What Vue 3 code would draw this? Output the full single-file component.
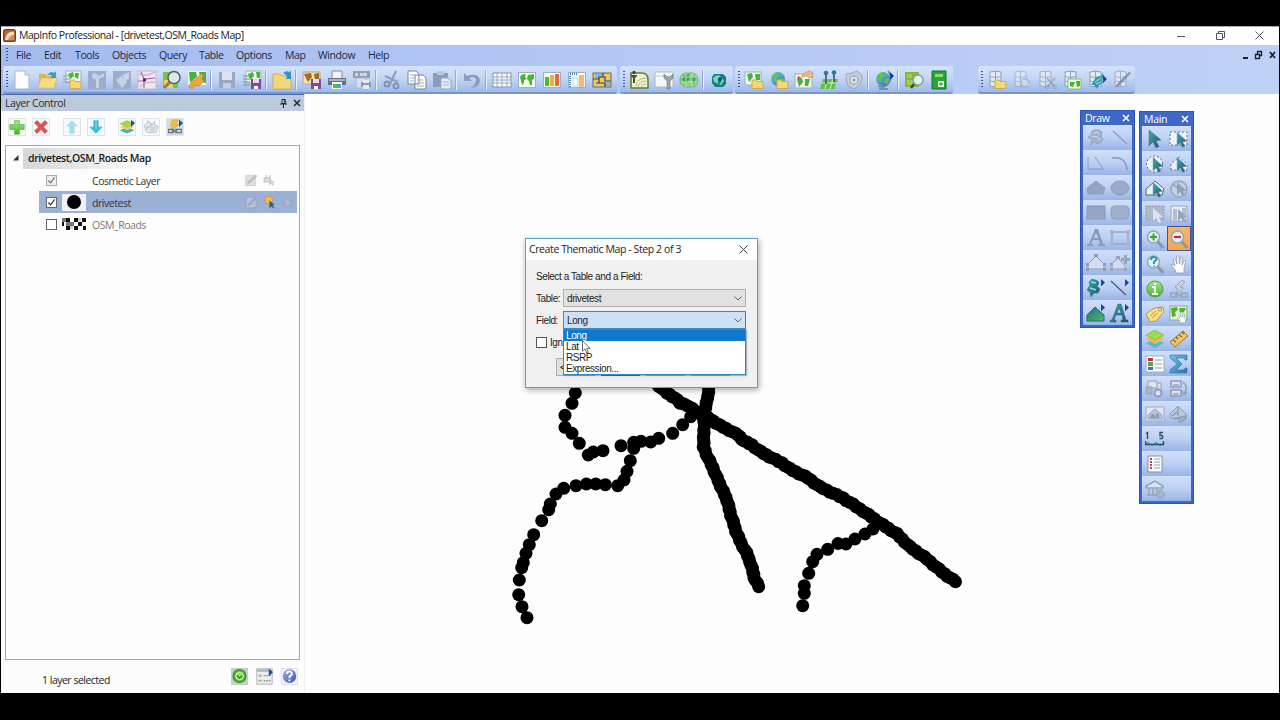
<script setup>
import { ref } from "vue";

const menus = ["File", "Edit", "Tools", "Objects", "Query", "Table", "Options", "Map", "Window", "Help"];

// "|" is a separator
const toolbars = [
  {
    name: "standard",
    items: [
      "page", "open", "openTable", "dim1", "dim2", "roads", "findMap", "mapHand", "|",
      "floppyOff", "saveMap", "|", "folderUp", "|",
      "saveBrown", "printer", "printOff", "|",
      "cut", "copy", "paste", "|", "undo", "|",
      "grid", "world", "chart", "layout", "redistrict",
    ],
  },
  { name: "utilities", items: ["contour", "wrench", "globeGreen", "|", "swirl"] },
  { name: "web", items: ["mapFolder", "globeFolder", "mapPick", "pins", "rings", "|", "globeStand", "|", "mapZoom", "book"] },
  { name: "dbms", items: ["dbFolder", "dbRefresh", "dbCut", "dbMap", "dbGear", "dbPen"] },
];

const drawTools = [
  "pinOff", "lineOff", "polyline", "arc", "polyOff", "ellipse", "rect", "roundRect",
  "textOff", "frame", "reshape", "addNode", "pinStyle", "lineStyle", "regionStyle", "textStyle",
];

const mainTools = [
  "arrow", "marquee", "radius", "polySelect", "boundary", "unselect", "invert", "graphSelect",
  "zoomIn", "zoomOut", "zoomAsk", "hand", "info", "hotlink", "tag", "dragMap",
  "layers", "ruler", "legend", "sigma", "district", "districtSwap", "clipOn", "clipSet",
  "scale", "", "list", "", "bank", "",
];

const panelTools = ["plus", "cross", "up", "down", "layers2", "reload", "hotlinks"];

const fields = ["Long", "Lat", "RSRP", "Expression..."];
const selectedField = ref("Long");

const cursor = '<path d="M8 3v14l3.2-3 2.2 4.5 2.6-1.3-2.3-4.3 4.3-.5z" fill="url(#teal)" stroke="#8aa9b6" stroke-width=".5"/>';
const sheet = '<rect x="1.5" y="2.5" width="17" height="15" fill="#f5fbf1" stroke="#a0afc0"/>';
const land = '<path d="M3 7q1-3 6-3l-1 3 2 2-3 1 0 3-2 2-1-4zM11 5l6-1v5l-2 1 0 5-2 0-1-4-2-2z" fill="#42b83b"/>';
const folder = '<path d="M8 10h4l1 1.5h6v7H8z" fill="#f3d878" stroke="#d0ad4c"/>';
const globe = '<circle cx="9" cy="9" r="7" fill="url(#blue)"/><path d="M3 6l6-4 2 3-4 3 0 4-3-2zM12 8l4 1-3 6-3-3zM12 3l3 3-3 0z" fill="#5ac64e"/>';
const db = '<path d="M3 2q5-2 11 0v14q-5 2-11 0z" fill="#e4ecf3" stroke="#8f9eb1"/><path d="M3 6.5q5 2 11 0M3 11q5 2 11 0M8.5 1v16" fill="none" stroke="#93a3b7"/>';
const floppy = '<path d="M9 9h10v10H9z" fill="#7b4c9b"/><path d="M11 9h6v4h-6z" fill="#e8d9ef"/><path d="M12 16h4v3h-4z" fill="#fff"/>';
const glass = '<path d="M12.5 12.5l5 5.5" stroke="#89979f" stroke-width="3" stroke-linecap="round"/><circle cx="8.5" cy="8" r="6" fill="#d9f1f2" stroke="#91a8b1" stroke-width="1.5"/>';
const handShape = '<path d="M7 19q0-3-5-8 1.5-1.5 4 1L4 5q1.5-1 2.5 1l1.5 4-.5-8q2-1 2.5 1l.5 7 1-7q2-.7 2 1l-.5 7 2-4.5q2 0 1.5 2L15 14v5z" fill="#fff" stroke="#8d9aab" stroke-width=".8"/>';
const blueTick = '<path d="M15 1l4 3.5-4 4z" fill="#1745a0"/>';

const icons = {
  app: '<rect x="1" y="1" width="18" height="18" rx="3" fill="#bd6332" stroke="#704126" stroke-width="2"/><path d="M3 17q1-13 14-13v13z" fill="#f7d9bc"/><path d="M8 17q1-7 9-8v8z" fill="#d98b55"/>',
  page: '<path d="M3 1h10l4 4v14H3z" fill="#fdfdff" stroke="#a9b5c5"/><path d="M13 1v4h4" fill="#dce4ee" stroke="#a9b5c5"/>',
  open: '<path d="M2 4h6l2 2h7v12H2z" fill="#d7b64d"/><path d="M1 18l3-10h16l-3 10z" fill="#f5dd84" stroke="#d4b354" stroke-width=".7"/><path d="M10 5q4-5 7-2l2-2v7h-6l2-2q-2-2-5-1z" fill="#3b9cc6"/>',
  openTable: '<rect x="4" y="1" width="15" height="11" fill="#edf8ea" stroke="#a1afb9"/><path d="M6 4l5-2 1 4-4 3zM13 3h4l-1 6-3-2z" fill="#45b53f"/><path d="M1 6h7M1 9h7M1 12h7" stroke="#8d9ab0"/>' + folder,
  dim1: '<path d="M1 1h18v18H1z" fill="#9dabcd"/><path d="M5 4q4-3 6 2l6-3v4q-4 0-5 3v8H9v-8L5 8z" fill="#c6d1e8"/>',
  dim2: '<path d="M1 1h18v18H1z" fill="#9dabcd"/><path d="M4 10l5-4 6 6-5 6zM10 5l7-3v7l-4 2z" fill="#c6d1e8"/>',
  roads: '<rect x="1" y="1" width="18" height="18" fill="#ece7ee" stroke="#c3bcc9"/><path d="M4 2l3 7 11-1M7 9l0 9M1 11h7" stroke="#a567a0" stroke-width="1.2" fill="none"/><path d="M2 4q8 3 16-2M3 17q3-5 15-5" stroke="#c99bc0" fill="none"/><circle cx="7.5" cy="10" r="1.7" fill="#512a57"/>',
  findMap: '<path d="M1 2h15v16H1z" fill="#7bc24d"/><path d="M2 10h9v8H2z" fill="#efcf62"/><path d="M8 12l-6 6" stroke="#a57a35" stroke-width="3"/><circle cx="12" cy="7.5" r="6" fill="#dce9e6" stroke="#4f6166" stroke-width="1.5"/>',
  mapHand: '<path d="M1 1h18v14H1z" fill="#e6f6e0"/><path d="M2 2l7 0 1 5-7 5zM12 2h7v11l-4-1z" fill="#43b33d"/><path d="M2 17l3-6 4-2 5-5 3 0-2 5 2 2-5 5-4-1-3 4z" fill="#eea63e" stroke="#b5762e" stroke-width=".6"/>',
  floppyOff: '<path d="M2 2h16v16H2z" fill="#9aa6c4"/><path d="M5 2h10v8H5z" fill="#dde3f0"/><path d="M6 13h8v5H6z" fill="#c6cee0"/>',
  saveMap: '<rect x="4" y="1" width="15" height="12" fill="#edf8ea" stroke="#a1afb9"/><path d="M6 4l5-2 1 4-4 4zM14 2h4v6h-3z" fill="#45b53f"/><path d="M1 6h7M1 9h7M1 12h7M1 15h7" stroke="#7d8ba3"/>' + floppy,
  folderUp: '<path d="M1 4h7l2 2h9v13H1z" fill="#f1d77b" stroke="#cfae55"/><path d="M11 3q4-3 6-1l2-1v8h-5l1-2q-1-3-4-4z" fill="#2d94c6"/>',
  saveBrown: '<rect x="1" y="2" width="17" height="12" fill="#f0dfb7" stroke="#baa783"/><path d="M2 4l7-1 1 4-4 5zM12 4l5-1v7h-4z" fill="#a66b21"/>' + floppy,
  printer: '<path d="M5 1h10v8H5z" fill="#eef2f7" stroke="#828c99"/><path d="M1 8h18v7H1z" fill="#65717e"/><path d="M2 9h16v2H2z" fill="#a9b4be"/><path d="M5 12h10v7H5z" fill="#eff9e9"/><path d="M6 14h4v4H6z" fill="#53b94b"/><path d="M10 14h4v4h-4z" fill="#4aa3db"/>',
  printOff: '<path d="M1 1h17v7H1z" fill="#929db3"/><path d="M3 3h3v3H3zM8 3h7v3H8z" fill="#cfd7e4"/><path d="M4 8h10v10H4z" fill="#d6dfee" stroke="#a7b5ce"/><path d="M9 12h10v5H9z" fill="#8e9aae"/><path d="M11 10h6v3h-6zM11 15h6v4h-6z" fill="#e6eaf0"/>',
  cut: '<path d="M14 1L8 14M3 6l13 6" stroke="#8e9dbb" stroke-width="2.2"/><circle cx="5" cy="14" r="2.5" fill="none" stroke="#8291b1" stroke-width="2"/><circle cx="14" cy="16" r="2.5" fill="none" stroke="#8291b1" stroke-width="2"/>',
  copy: '<path d="M1 1h8l3 3v10H1zM8 5h8l3 3v11H8z" fill="#fafcff" stroke="#78869b"/><path d="M3 5h5M3 8h4M3 11h4M10 10h6M10 13h7M10 16h7" stroke="#a5b1c0"/>',
  paste: '<path d="M1 3h15v14H1z" fill="#8c9abb"/><path d="M5 1h7v4H5z" fill="#bbc5d8"/><path d="M9 8h7l3 3v8H9z" fill="#e6ebf5" stroke="#9ba8c2"/><path d="M11 12h6M11 15h6" stroke="#a7b2c7"/>',
  undo: '<path d="M2 3v8h8L7 8q6-2 7 2 0 4-5 8 9-1 9-8-2-8-13-4z" fill="#8e9cbd"/>',
  grid: '<rect x="1" y="3" width="18" height="14" fill="#f8fbff" stroke="#8694a9"/><path d="M1 7h18M1 10h18M1 13h18M5 3v14M10 3v14M15 3v14" stroke="#9daabd"/>',
  world: sheet + land,
  chart: sheet + '<path d="M3 7h4v9H3z" fill="#47b548"/><path d="M8 5h4v11H8z" fill="#f0ad37"/><path d="M13 4h4v12h-4z" fill="#e86934"/>',
  layout: sheet + '<path d="M3 4h8M3 6v11" stroke="#4188c7" stroke-width="2" stroke-dasharray="1 1"/><path d="M12 5h5v12h-5z" fill="#efbb7b"/><path d="M6 8h5v8H6z" fill="#f7fcff" stroke="#94b1c8" stroke-width=".5"/>',
  redistrict: '<rect x="1" y="3" width="18" height="14" fill="#f4c45e" stroke="#5f6d7a"/><path d="M3 4h7v4H3zM12 12h6v4h-6z" fill="#77bddb"/><path d="M1 9h6v4h6v4M7 9V7h6v4h6M11 3v4M4 13h5" stroke="#34454f" stroke-width="1.2" fill="none"/>',
  contour: '<path d="M2 3h11q6 0 6 7v8H2z" fill="#edf1ce" stroke="#687e30" stroke-width="1.6"/><path d="M7 16q1-8 10-8M9 17q1-6 8-6M12 17q1-3 5-3" stroke="#b5bc7c" fill="none"/><circle cx="5" cy="2.5" r="1.8" fill="#444"/><path d="M2 5h6v1L6 8v5H4V8L2 6z" fill="#444c4c"/>',
  wrench: '<path d="M1 2h18v15H1z" fill="#f5f6f8" stroke="#b0b8c5"/><path d="M1 6h18" stroke="#c6ced7"/><path d="M10 4v4l3 3v8h3v-8l3-3V4l-3 3h-3z" fill="#9ca5ac" stroke="#6c767e" stroke-width=".6"/>',
  globeGreen: '<rect x="1" y="3" width="18" height="14" rx="6" fill="#8fd184" stroke="#6cb768"/><path d="M4 6l6-2 1 5-4 4-4-3zM12 6l5 1-2 7-3-4z" fill="#37aa53"/><path d="M2 7h16M2 12h16M7 3v14M13 3v14" stroke="#c0e8ba" stroke-width=".8"/>',
  swirl: '<path d="M5 4h9l3 3v7l-3 3H6l-3-4V7z" fill="#177c89"/><path d="M4 8q3-4 8-2l-3 2v6l-4-2zM13 8l2 3-3 4h-2l2-3z" fill="#7fd4b0"/><circle cx="11" cy="9.5" r="1.8" fill="#124f60"/>',
  mapFolder: '<rect x="1" y="2" width="16" height="13" fill="#edf8ea" stroke="#a1afb9"/><path d="M3 4l5-1 1 4-4 5zM11 4h5v6h-4z" fill="#45b53f"/>' + folder,
  globeFolder: globe + folder,
  mapPick: '<rect x="1" y="4" width="17" height="14" fill="#edf8ea" stroke="#a1afb9"/><path d="M3 9l5-1 1 4-4 5zM11 9h5l-2 7h-3z" fill="#45b53f"/><path d="M8 5l4-3 4-1 3 2v4l-4 1-2-2-5 1z" fill="#eeb681" stroke="#bd8055" stroke-width=".5"/><circle cx="5" cy="8" r="1.8" fill="#cf5e30"/>',
  pins: '<path d="M4 9h15l-4 10H1z" fill="#65bd4d"/><path d="M3 13h14M8 9L6 19M14 9l-3 10" stroke="#d8efbd"/><path d="M7 4v10M15 3v9" stroke="#274c63" stroke-width="1.5"/><circle cx="7" cy="3" r="2.3" fill="#2d79a1"/><circle cx="15" cy="2.5" r="2.3" fill="#2d79a1"/>',
  rings: '<path d="M2 4l6-1 5-2 5 4 0 5-3 6-5 3-6-3-2-6z" fill="#c3cbd8" stroke="#99a8bb"/><circle cx="10" cy="10" r="4" fill="#e2e8f0" stroke="#a2afc0" stroke-width="1.5"/><circle cx="10" cy="10" r="1.5" fill="#8494a9"/>',
  globeStand: globe + '<path d="M14 1q6 7-1 14-4 3-9 1M9 16v3M5 19h9" fill="none" stroke="#6386a8" stroke-width="1.6"/><path d="M16 2l4 4-4 4z" fill="#1b3d98"/>',
  mapZoom: '<path d="M1 2h14v15H1z" fill="#84b83a"/><path d="M3 4h5v4H3zM3 10h7v5H3z" fill="#a6cb55"/><path d="M10 14l-3 4" stroke="#35454f" stroke-width="2.5"/><circle cx="14" cy="10" r="5" fill="#e0f1f2" stroke="#899ea7" stroke-width="1.5"/>',
  book: '<path d="M3 1h14v18H3z" fill="#28a534" stroke="#16772b"/><path d="M6 4h8v3H6z" fill="#8bdd70"/><path d="M9 11h6v6H9z" fill="#dff3dd"/><path d="M10 14h4M12 12v4" stroke="#318854"/>',
  dbFolder: db + folder,
  dbRefresh: '<g opacity=".6">' + db + '<circle cx="13" cy="13" r="4" fill="#d9e1ec" stroke="#a1adbe" stroke-width="2"/><path d="M10 10l7 5" stroke="#dae1e9" stroke-width="2"/></g>',
  dbCut: '<g opacity=".7">' + db + '<path d="M10 8l8 9M18 8l-8 9" stroke="#8e98a7" stroke-width="1.7"/><circle cx="10" cy="17" r="2" fill="none" stroke="#8e98a7"/><circle cx="18" cy="17" r="2" fill="none" stroke="#8e98a7"/></g>',
  dbMap: db + '<path d="M6 9h13v10H6z" fill="#eef8e4" stroke="#8fb877"/><path d="M8 12h5l-2 5-3-1zM14 11h4v5l-3 1z" fill="#39b831"/>',
  dbGear: db + '<path d="M6 12l3-5 5-1 2-3 1 3-2 4 1 3-4 2-2 4-3-4-3 0z" fill="#2f9cb4"/><path d="M8 12l6-4M9 14l5-2" stroke="#a3e1ec"/><path d="M16 5l4 4-4 4z" fill="#1e439a"/>',
  dbPen: '<g opacity=".75">' + db + '</g><path d="M3 18l2-4L17 2l2 1L7 16z" fill="#8793a8"/>',
  plus: '<path d="M7 2h6v5h6v6h-6v6H7v-6H1V7h6z" fill="url(#green)" stroke="#50b239" stroke-width=".8"/>',
  cross: '<path d="M2 5l3-3 5 5 5-5 3 3-5 5 5 5-3 3-5-5-5 5-3-3 5-5z" fill="#e45252" stroke="#bf3339" stroke-width=".8"/>',
  up: '<path d="M10 2l7 7h-4v9H7V9H3z" fill="#a1dfed" stroke="#b8e5f0"/>',
  down: '<path d="M7 2h6v8h5l-8 8-8-8h5z" fill="#37b6df" stroke="#70c9e2"/><path d="M9 3h2v10H9z" fill="#76d8ee"/>',
  layers2: '<path d="M1 14l9-4 9 4-9 4z" fill="#44aebf"/><path d="M1 10l9-4 9 4-9 4z" fill="#f4cc61"/><path d="M1 6l9-4 9 4-9 4z" fill="#a0d84c" stroke="#71b849" stroke-width=".5"/><path d="M15 1l5 4-5 5z" fill="#1753a4"/>',
  reload: '<path d="M2 11q-1-5 4-6V2l5 5-5 4V9q-3 1-1 4zM9 4l2 4 3-5 1 5 4 1-3 8H5l-3-4" fill="#dce7ef" stroke="#a9bfd0"/><path d="M8 11h8M9 14h6" stroke="#a9bfd0"/>',
  hotlinks: '<rect width="20" height="20" fill="#d6dbe2"/><path d="M7 1h7l-3 6h4L5 15l2-6H4z" fill="#f4bf40" stroke="#ce9631" stroke-width=".6"/><path d="M2 13h6v4H2zM11 13h7v4h-7zM6 15h7" stroke="#64778c" stroke-width="1.6" fill="none"/><path d="M15 1l5 4-5 5z" fill="#1753a4"/>',
  pinOff: '<path d="M6 3q6-3 10 1l-1 4 2 4-5 4-4-2-4 4 2-6-4-3q4-1 4-6z" fill="#a4b2cd" stroke="#8b9cbb" stroke-width=".7"/><path d="M8 5q4-2 5 1M6 9q5-2 8 3" stroke="#d7dfec" fill="none"/>',
  lineOff: '<path d="M3 3l14 13" stroke="#8d9cbd" stroke-width="1.3"/>',
  polyline: '<path d="M2 4v12h15L9 4" stroke="#99a8c7" stroke-width="1.3" fill="none"/>',
  arc: '<path d="M2 5q14-2 15 12" stroke="#8799bd" stroke-width="1.5" fill="none"/>',
  polyOff: '<path d="M10 3l9 7-2 6H2l-1-6z" fill="#94a4c4" stroke="#8b9cbd"/>',
  ellipse: '<ellipse cx="10" cy="10" rx="9" ry="7" fill="#9aaac8" stroke="#8b9cbd"/>',
  rect: '<rect x="1" y="3" width="18" height="13" fill="#95a5c5" stroke="#8798ba"/>',
  roundRect: '<rect x="1" y="3" width="18" height="13" rx="4" fill="#a0afcb" stroke="#8d9ebf"/>',
  textOff: '<path d="M9 1h3l5 15h2v2h-7v-2h2l-1-4H7l-2 4h2v2H1v-2h2zM8 10h4l-2-5z" fill="#8c9bbb"/>',
  frame: '<rect x="2" y="4" width="16" height="12" fill="none" stroke="#99a7c3" stroke-width="1.5"/><path d="M0 2h4v4H0zM16 2h4v4h-4zM0 14h4v4H0zM16 14h4v4h-4z" fill="#a7b4cc"/>',
  reshape: '<path d="M2 16v-5l8-8 8 8v5z" fill="#d3dced" stroke="#91a0bb"/><path d="M0 15h3v3H0zM0 10h3v3H0zM8 1h4v3H8zM17 10h3v3h-3zM17 15h3v3h-3z" fill="#8d9bb3"/>',
  addNode: '<path d="M2 16v-5l6-6 7 8v3z" fill="#d3dced" stroke="#91a0bb"/><path d="M0 15h3v3H0zM0 10h3v3H0zM6 3h4v3H6zM14 15h3v3h-3zM14 2h3v3h3v3h-3v3h-3V8h-3V5h3z" fill="#98a6bb"/>',
  pinStyle: '<path d="M3 4l3-3 6 2 1 3-2 2 3 3-2 4-4 0-3 4-1-5-3-2 2-3 1-2z" fill="url(#teal)" stroke="#2c8193" stroke-width=".7"/><path d="M5 4l5 1M4 10l6 2" stroke="#8be1e4" stroke-width="1.5" fill="none"/>' + blueTick,
  lineStyle: '<path d="M1 3l15 14" stroke="#3c6374" stroke-width="1.3"/>' + blueTick,
  regionStyle: '<path d="M9 4l9 8v6H1v-6z" fill="url(#region)" stroke="#24706e"/>' + blueTick,
  textStyle: '<path d="M8 1h3l5 16h2v2h-7v-2h2l-1-5H6l-2 5h2v2H0v-2h2zM7 10h4L9 5z" fill="url(#teal)" stroke="#25657a" stroke-width=".5"/>' + blueTick,
  arrow: '<path d="M4 1v16l4-4 3 6 3-1.5-3-5.5 5-1z" fill="url(#teal)" stroke="#467f90" stroke-width=".6"/>',
  marquee: '<path d="M1 3h17v13H1z" stroke="#566f8f" stroke-dasharray="2 2" fill="#edf3f9"/>' + cursor,
  radius: '<circle cx="9.5" cy="10" r="8" stroke="#48617c" stroke-dasharray="2 2" fill="#eaf2f6"/>' + cursor,
  polySelect: '<path d="M2 16v-6l8-7 8 7v6z" stroke="#58718e" stroke-dasharray="2 2" fill="#eaf2f6"/>' + cursor,
  boundary: '<path d="M1 16v-6l9-8 9 8-2 6z" stroke="#536776" fill="#eef5eb"/>' + cursor,
  unselect: '<circle cx="10" cy="10" r="8" fill="#c7d2e1" stroke="#9badc6" stroke-width="2"/><path d="M4 5l12 11" stroke="#9badc6" stroke-width="2"/><path d="M8 3v13l3-3 3 4 2-1-2-4h4z" fill="#91a3bb"/>',
  invert: '<path d="M1 2h18v14H1z" fill="#aebacb" stroke="#8f9db4" stroke-dasharray="2 1"/><path d="M8 4v13l3-3 3 5 2-1-2-5h4z" fill="#dce5ef"/>',
  graphSelect: '<path d="M2 2h16v15H2z" fill="#e6ecf3" stroke="#99a8bc"/><path d="M4 5h4v11H4zM13 4h4v12h-4z" fill="#b3bfcf"/><path d="M9 5v12l3-3 3 4 2-1-3-4h4z" fill="#93a4bb"/>',
  zoomIn: glass + '<path d="M8.5 4.5v7M5 8h7" stroke="#36a633" stroke-width="2"/>',
  zoomOut: glass + '<path d="M5 8h7" stroke="#c62b29" stroke-width="2.2"/>',
  zoomAsk: glass + '<path d="M6 6q0-3 3-3 4 1 2 3L9 8v2m0 1.5v1" stroke="#238fa9" stroke-width="1.8" fill="none"/>',
  hand: handShape,
  info: '<circle cx="10" cy="10" r="8" fill="url(#green)" stroke="#579d45"/><path d="M10 4v2M7 8h3v7M7 15h6" fill="none" stroke="#fff" stroke-width="2"/>',
  hotlink: '<path d="M13 1l3 2-5 5 4 1-9 7 3-6-3-2z" fill="#c8d1de" stroke="#99a8be"/><path d="M2 14h6v4H2zM12 14h6v4h-6zM6 16h8" stroke="#94a5bf" stroke-width="1.5" fill="none"/>',
  tag: '<path d="M1 10l8-6 9-1 1 5-8 9-6 1z" fill="#f5df88" stroke="#b09a56"/><circle cx="15" cy="5.5" r="1.5" fill="#fff" stroke="#977e45"/><path d="M5 12l6-5M7 14l6-5" stroke="#cb9946"/>',
  dragMap: '<rect x="1" y="2" width="17" height="14" fill="#e6f5db" stroke="#8ea698"/><path d="M2 4l6-1 1 3-3 2 1 4-4 1zM10 4h7l-2 4-4 1z" fill="#48b42f"/><g transform="translate(7 7) scale(.62)">' + handShape + '</g>',
  layers: '<path d="M1 14l9-4 9 4-9 5z" fill="#55bad0"/><path d="M1 10l9-4 9 4-9 5z" fill="#f3b84b"/><path d="M1 6l9-5 9 5-9 5z" fill="#9bdd50" stroke="#63b552" stroke-width=".6"/>',
  ruler: '<path d="M1 13L14 2l5 5L6 18z" fill="#eec465" stroke="#a87730"/><path d="M4 11l3 2M7 8l2 2M10 6l3 2M13 3l2 2" stroke="#865c22" stroke-width="1.3"/>',
  legend: '<rect x="1" y="2" width="18" height="16" fill="#f9fafc" stroke="#a3b0bd"/><path d="M3 4h5v3H3z" fill="#c12f39"/><path d="M3 8h5v4H3z" fill="#54a747"/><path d="M3 13h5v3H3z" fill="#3778b0"/><path d="M10 6h7M10 10h7M10 14h7" stroke="#9ba4ae"/>',
  sigma: '<path d="M1 1h17v5h-2l-1-2H7l6 6-6 6h8l1-2h2v5H1v-3l7-6-7-6z" fill="url(#blue)" stroke="#3a7ca9" stroke-width=".7"/>',
  district: '<path d="M3 2h9v7H3zM12 4h4v8" stroke="#94a3b9" fill="#dbe3ef"/><path d="M1 8h6v7H1z" fill="#aab7cb" stroke="#91a1ba"/><circle cx="13" cy="14" r="3.5" fill="#dce3ec" stroke="#8c9db5" stroke-width="2"/>',
  districtSwap: '<path d="M2 2h10v6H2zM2 11h10v6H2z" fill="#dce4ee" stroke="#8c9db5" stroke-width="1.5"/><path d="M4 6h6M4 15h6M14 3q6 5 1 12M13 12l2 4 3-3" stroke="#91a2bb" stroke-width="1.5" fill="none"/>',
  clipOn: '<path d="M1 3h18v14H1z" fill="#e0e6ee" stroke="#9eabbf"/><path d="M3 15v-4l7-6 7 6v4z" fill="#bac5d5" stroke="#95a4bb"/><path d="M5 14q1-5 4-4l2 4zM11 9l3 1v4h-3z" fill="#8b9cb5"/>',
  clipSet: '<path d="M1 14v-4l8-8 9 9-1 4z" fill="#bbc6d6" stroke="#90a0b8"/><path d="M5 15l12-3-1 3-5 3-2-3M9 3v9M3 12l5-4" stroke="#8c9db5" stroke-width="1.3" fill="none"/>',
  scale: '<path d="M1 15q2-3 4 0t4 0 4 0 5 0" stroke="#387681" fill="none"/><path d="M.5 12v3.5h18V12" stroke="#255563" stroke-width="1.5" fill="none"/><path d="M1 4.5l1.5-1V10M18 3.500h-3v3h2q1.500 1.500 0 3h-2.500" stroke="#255563" stroke-width="1.4" fill="none"/>',
  list: '<path d="M3 2h14v16H3z" fill="#f9fbfd" stroke="#8291a5"/><path d="M6 4v12" stroke="#c43e46" stroke-width="2" stroke-dasharray="2 1"/><path d="M9 5h6M9 8h6M9 11h6M9 14h6" stroke="#93a0b0"/>',
  bank: '<path d="M1 7l9-5 8 5v2H1zM2 16h13M4 9v7M8 9v7M12 9v7" stroke="#92a2b9" stroke-width="1.5" fill="#d8e1ec"/><path d="M14 11h3v3h3v3h-3v3h-3v-3h-3v-3h3z" fill="#aab8cb" stroke="#8999b3" stroke-width=".6"/>',
  editOff: '<path d="M1 2h15v16H1z" fill="#dedede" stroke="#c8c8c8"/><path d="M3 16l2-5L16 1l3 2L8 14z" fill="#bdbdbd"/>',
  editSel: '<path d="M2 2h15v16H2z" fill="#b4c3d8" stroke="#8da4c3"/><path d="M4 16l2-5 9-9 3 2-9 9z" fill="#91a6c3"/>',
  selOff: '<path d="M2 6h9v6H2zM5 2v4M12 2l-2 4" fill="#e1e1e1" stroke="#c5c5c5" stroke-width="2"/><path d="M9 6v12l3-3 3 3 2-1-2-4h3z" fill="#d0d0d0"/>',
  bulb: '<path d="M3 3q7-5 12 1 1 4-4 8H7q-6-4-4-9z" fill="#f7bc3f" stroke="#c68a34"/><path d="M10 7v12l3-3 3 3 1-1-2-4h3z" fill="#2a6073"/>',
  tagSel: '<path d="M2 12L11 2l2 6h5L9 18l-2-6z" fill="#a9bbd3" stroke="#8ba2c0"/>',
  green: '<rect width="20" height="20" fill="#c7cdc7"/><circle cx="10" cy="9.5" r="7.5" fill="#62b93e" stroke="#358b29" stroke-width="1.5"/><circle cx="10" cy="9.5" r="4.5" fill="#8ce169" stroke="#d6f8bc"/><path d="M7 9l3 3 3-3" fill="none" stroke="#277b26" stroke-width="1.5"/>',
  options: '<rect x="1" y="1" width="18" height="18" fill="#eef0ee" stroke="#a4abb5"/><path d="M1 3h18" stroke="#a9b6c2" stroke-width="3"/><path d="M3 9h4M3 15h4" stroke="#b9b985" stroke-width="2.5"/><path d="M9 9h8M9 15h8" stroke="#87929c" stroke-width="1.5" stroke-dasharray="2 1"/><path d="M15 1l5 4-5 5z" fill="#204c9d"/>',
  help: '<rect x=".5" y=".5" width="19" height="19" fill="#f3f4f8" stroke="#dadde5"/><circle cx="10" cy="9.5" r="8" fill="url(#help)"/><path d="M7 7q0-3 3-3 4 1 2.5 4L10 10v2M10 13.5v2" fill="none" stroke="#fff" stroke-width="2.2"/>',
};

// drive test samples that stand apart from each other
const samples = [
  [575.3, 393], [572, 403.3], [565, 415.3], [565, 427.3], [572, 433.3], [579.3, 443.3],
  [588.3, 455], [593.3, 452], [603, 450.7], [621, 445.7], [633.7, 442.3], [633.7, 448.3],
  [641, 441.3], [650.7, 442], [658.7, 438.3], [672.7, 433.3], [682.7, 424.7], [690.7, 416.7],
  [630.3, 460.7], [627, 471.3], [624, 480], [617.7, 485.7], [605.3, 484.7], [595.7, 484],
  [586.3, 484], [576, 485.7], [563.7, 488.3], [556, 494], [550.3, 504], [548.7, 509.7],
  [541.7, 520.7], [533.7, 534.7], [529.3, 544.7], [526, 553.3], [523.3, 562.7], [521.7, 567.7],
  [519.3, 580], [518.7, 594.7], [522, 606.7], [527, 617.7],
  [873, 529], [865, 534], [855, 539], [846, 544], [838, 543.5], [827.7, 549.3], [817, 554.3],
  [812.7, 561.7], [808.7, 573.3], [804.3, 585.7], [804.3, 593.3], [802.7, 605.7],
];

const routes = [
  [[659, 386], [667, 393], [675, 398], [680, 403], [687, 405], [695, 411], [704, 415], [713, 421], [720, 425.5], [729, 430], [738, 435], [744, 441], [752, 445], [761, 452], [772, 458], [782, 463], [790, 469], [808, 478], [820, 487], [843, 498], [863, 511], [880, 523], [897, 534], [910, 547], [927, 559], [942, 572], [955.5, 581.7]],
  [[709, 386], [708, 396], [706, 405], [704, 415], [704, 430], [703.5, 447], [708, 458], [713, 468], [717, 478], [722, 489], [727, 500], [730, 512], [734, 525], [737, 534], [741, 543], [746.5, 553], [750, 561.7], [753, 572], [755, 580], [758.7, 586.7]],
];

function fillRoute(points) {
  const out = [];
  for (let i = 0; i < points.length - 1; i++) {
    const [x1, y1] = points[i];
    const [x2, y2] = points[i + 1];
    const n = Math.ceil(Math.hypot(x2 - x1, y2 - y1) / 4);
    for (let k = 0; k < n; k++) {
      const shift = ((out.length * 7) % 5) / 5 - 0.4;
      out.push([x1 + ((x2 - x1) * k) / n + shift, y1 + ((y2 - y1) * k) / n - shift]);
    }
  }
  out.push(points[points.length - 1]);
  return out;
}

const dots = [...samples, ...routes.flatMap(fillRoute)];
</script>

<template>
  <div class="screen">
    <svg class="defs">
      <linearGradient id="teal" x1="0" y1="0" x2="1" y2="1">
        <stop offset="0" stop-color="#46a9b8" />
        <stop offset="1" stop-color="#1c4f63" />
      </linearGradient>
      <linearGradient id="green" x1="0" y1="0" x2="0" y2="1">
        <stop offset="0" stop-color="#a5ea8b" />
        <stop offset="1" stop-color="#45b034" />
      </linearGradient>
      <linearGradient id="blue" x1="0" y1="0" x2="1" y2="1">
        <stop offset="0" stop-color="#76c4e4" />
        <stop offset="1" stop-color="#2873b0" />
      </linearGradient>
      <linearGradient id="region" x1="0" y1="0" x2="1" y2="1">
        <stop offset="0" stop-color="#216c7c" />
        <stop offset="1" stop-color="#52b968" />
      </linearGradient>
      <linearGradient id="help" x1="0" y1="0" x2="1" y2="1">
        <stop offset="0" stop-color="#a5b0e4" />
        <stop offset="1" stop-color="#4152ad" />
      </linearGradient>
    </svg>

    <div class="app">
      <header class="titlebar">
        <svg class="logo" viewBox="0 0 20 20" v-html="icons.app"></svg>
        <span class="title">MapInfo Professional - [drivetest,OSM_Roads Map]</span>
        <svg class="win-buttons" viewBox="0 0 90 12" fill="none" stroke="#555">
          <path d="M1 6.5h8M40.5 3.5h6v6h-6zM42.5 3.5v-2h6v6h-2M79.5 1.5l8 8M87.5 1.5l-8 8" />
        </svg>
      </header>

      <nav class="menubar">
        <i class="grip"></i>
        <span v-for="m in menus" :key="m" class="menu" :class="'menu-' + m.toLowerCase()">{{ m }}</span>
        <svg class="mdi-buttons" viewBox="0 0 36 10" fill="none" stroke="#1a1d2b">
          <path d="M1 8h5" stroke-width="2" />
          <path d="M13.5 4.5h4v4h-4zM15.5 4V1.5h4v4H18" stroke-width="1.3" />
          <path d="M28 2l5 6M33 2l-5 6" stroke-width="1.7" />
        </svg>
      </nav>

      <div class="toolbars">
        <div v-for="bar in toolbars" :key="bar.name" class="toolbar" :class="bar.name">
          <i class="grip"></i>
          <template v-for="(item, i) in bar.items" :key="i">
            <i v-if="item === '|'" class="sep"></i>
            <span v-else class="tool"><svg viewBox="0 0 20 20" v-html="icons[item]"></svg></span>
          </template>
        </div>
      </div>

      <main class="work">
        <aside class="panel">
          <div class="panel-head">
            <span>Layer Control</span>
            <svg viewBox="0 0 22 10" fill="none" stroke="#1f2630">
              <path d="M3 1.5h3v4H3zM1 6h7M4.5 6v4M6 1v5" />
              <path d="M15 2l6 6M21 2l-6 6" stroke-width="1.5" />
            </svg>
          </div>
          <div class="panel-tools">
            <span v-for="t in panelTools" :key="t" class="ptool" :class="t">
              <svg viewBox="0 0 20 20" v-html="icons[t]"></svg>
            </span>
          </div>
          <div class="tree">
            <div class="tree-root">
              <svg viewBox="0 0 6 6"><path d="M5.5 0v5.5H0z" fill="#333" /></svg>
              <b>drivetest,OSM_Roads Map</b>
            </div>
            <div class="layer">
              <span class="check muted"><svg viewBox="0 0 10 10"><path d="M1.5 5L4 7.5l4.500-6" /></svg></span>
              <span class="swatch"></span>
              <span class="name">Cosmetic Layer</span>
              <svg class="flag" viewBox="0 0 20 20" v-html="icons.editOff"></svg>
              <svg class="flag" viewBox="0 0 20 20" v-html="icons.selOff"></svg>
            </div>
            <div class="layer selected">
              <span class="check"><svg viewBox="0 0 10 10"><path d="M1.5 5L4 7.5l4.500-6" /></svg></span>
              <span class="swatch point"><i></i></span>
              <span class="name">drivetest</span>
              <svg class="flag" viewBox="0 0 20 20" v-html="icons.editSel"></svg>
              <svg class="flag" viewBox="0 0 20 20" v-html="icons.bulb"></svg>
              <svg class="flag" viewBox="0 0 20 20" v-html="icons.tagSel"></svg>
            </div>
            <div class="layer off">
              <span class="check"></span>
              <span class="swatch">
                <svg class="checker" viewBox="0 0 24 12">
                  <path d="M0 0h4v4H0zM8 4h4v4H8zM4 4h4v4H4z" fill="#777" />
                  <path d="M4 0h4v4H4zM12 0h4v4h-4zM20 0h4v4h-4zM0 4h2v4H0zM16 4h4v4h-4zM4 8h4v4H4zM12 8h4v4h-4zM21 8h3v4h-3z" fill="#111" />
                  <path d="M8 8h3v3H8zM16 0h3v3h-3z" fill="#ccc" />
                </svg>
              </span>
              <span class="name">OSM_Roads</span>
            </div>
          </div>
          <div class="panel-foot">
            <span>1 layer selected</span>
            <svg viewBox="0 0 20 20" v-html="icons.green"></svg>
            <svg viewBox="0 0 20 20" v-html="icons.options"></svg>
            <svg viewBox="0 0 20 20" v-html="icons.help"></svg>
          </div>
        </aside>
        <svg class="map" viewBox="305 94 974 599">
          <circle v-for="(d, i) in dots" :key="i" :cx="d[0]" :cy="d[1]" r="6.5" />
        </svg>
      </main>
    </div>

    <section class="palette draw">
      <h2><span>Draw</span><svg viewBox="0 0 8 8"><path d="M1 1l6 6M7 1L1 7" /></svg></h2>
      <div class="cells">
        <span v-for="t in drawTools" :key="t" class="cell">
          <svg viewBox="0 0 20 20" v-html="icons[t]"></svg>
        </span>
      </div>
    </section>

    <section class="palette main">
      <h2><span>Main</span><svg viewBox="0 0 8 8"><path d="M1 1l6 6M7 1L1 7" /></svg></h2>
      <div class="cells">
        <span v-for="(t, i) in mainTools" :key="i" class="cell" :class="{ active: t === 'zoomOut' }">
          <svg v-if="t" viewBox="0 0 20 20" v-html="icons[t]"></svg>
        </span>
      </div>
    </section>

    <section class="dialog">
      <div class="dialog-title">
        <span>Create Thematic Map - Step 2 of 3</span>
        <svg viewBox="0 0 9 9"><path d="M.5.5l8 8M8.5.5l-8 8" fill="none" stroke="#444" /></svg>
      </div>
      <div class="dialog-body">
        <p>Select a Table and a Field:</p>
        <div class="row">
          <label>Table:</label>
          <div class="combo">
            <span>drivetest</span>
            <svg viewBox="0 0 8 5"><path d="M.5.5L4 4 7.5.5" /></svg>
          </div>
        </div>
        <div class="row">
          <label>Field:</label>
          <div class="combo open">
            <span>{{ selectedField }}</span>
            <svg viewBox="0 0 8 5"><path d="M.5.5L4 4 7.5.5" /></svg>
            <ul>
              <li v-for="f in fields" :key="f" :class="{ on: f === selectedField }" @click="selectedField = f">{{ f }}</li>
            </ul>
          </div>
        </div>
        <div class="ignore"><i></i>Ign</div>
        <div class="buttons"><button>&lt;</button><button class="next"></button><button></button><button></button></div>
      </div>
      <svg class="pointer" viewBox="0 0 9 14">
        <path d="M.5.7v10.500l2.500-2.300 1.700 4.200 1.700-.7-1.700-4h3.300z" fill="#fff" stroke="#444" stroke-width=".8" />
      </svg>
    </section>
  </div>
</template>

<style>
body {
  margin: 0;
  background: #000;
}
</style>

<style scoped>
.screen {
  position: relative;
  box-sizing: border-box;
  width: 1280px;
  height: 720px;
  padding: 26px 1px 27px;
  background: #000;
  overflow: hidden;
  font-family: "Open Sans", "Noto Sans", sans-serif;
  font-size: 10.5px;
  letter-spacing: -0.5px;
  color: #222;
  white-space: nowrap;
}

.defs {
  position: absolute;
  width: 0;
  height: 0;
}

.screen * {
  box-sizing: border-box;
}

.app {
  display: flex;
  flex-direction: column;
  height: 667px;
  background: #fdfdfd;
}

.titlebar {
  display: flex;
  align-items: center;
  height: 19px;
  padding: 0 13px 1px 2px;
  border-top: 1px solid #aaa;
  background: #fff;
}

.logo {
  width: 13px;
  height: 13px;
}

.title {
  flex: 1;
  margin-left: 3px;
  padding-bottom: 1px;
  letter-spacing: -0.48px;
}

.win-buttons {
  width: 90px;
  height: 12px;
}

.menubar {
  display: flex;
  align-items: center;
  height: 21px;
  padding: 0 1px 1px 5px;
  background: linear-gradient(90deg, #a3baf0, #b2c7f5 45%, #bed1f5);
}

.grip {
  width: 2px;
  height: 14px;
  background: repeating-linear-gradient(#445a8b 0 1px, transparent 1px 3px);
}

.menu {
  letter-spacing: -0.4px;
  color: #20283c;
}

.menu-file { width: 28px; margin-left: 8px; }
.menu-edit { width: 31px; }
.menu-tools { width: 37px; }
.menu-objects { width: 47px; }
.menu-query { width: 40px; }
.menu-table { width: 37px; }
.menu-options { width: 49px; }
.menu-map { width: 33px; }
.menu-window { width: 50px; }

.mdi-buttons {
  width: 36px;
  height: 10px;
  margin-left: auto;
}

.toolbars {
  display: flex;
  height: 28px;
  padding-left: 2px;
  background: linear-gradient(90deg, #a3baf0, #b2c7f5 45%, #bed1f5);
}

.toolbar {
  display: flex;
  align-items: center;
  height: 28px;
  padding: 1px 0 0 3px;
  border-radius: 3px;
  border-bottom: 2px solid #7895cf;
  background: linear-gradient(#d5e3fa, #c5d7f5 45%, #9db8ea);
}

.toolbar .grip {
  height: 18px;
  margin-right: 1px;
}

.standard { width: 614px; }
.utilities { width: 113px; margin-left: 3px; }
.web { width: 218px; margin-left: 2px; }
.dbms { width: 157px; margin-left: 25px; }

.tool {
  display: flex;
  justify-content: center;
  width: 25px;
}

.tool svg {
  width: 20px;
  height: 20px;
}

.sep {
  width: 1px;
  height: 20px;
  margin: 0 2px;
  background: #e8f0fd;
  box-shadow: -1px 0 #94aad5;
}

.work {
  display: flex;
  height: 599px;
}

.panel {
  display: flex;
  flex-direction: column;
  width: 304px;
  background: #fcfcfc;
  border-right: 1px solid #eee;
}

.panel-head {
  display: flex;
  align-items: center;
  justify-content: space-between;
  height: 17px;
  padding: 0 3px 1px 4px;
  background: #bdcad9;
  border-top: 1px solid #4769aa;
  color: #252d38;
}

.panel-head span {
  letter-spacing: -0.42px;
}

.panel-head svg {
  width: 22px;
  height: 10px;
}

.panel-tools {
  display: flex;
  align-items: center;
  height: 34px;
  padding: 0 0 2px 7px;
  gap: 5.6px;
}

.ptool {
  display: flex;
  width: 18px;
  height: 18px;
  border: 1px solid #dfe4e9;
  background: #f6f8f9;
}

.ptool.up,
.ptool.layers2 {
  margin-left: 8px;
}

.tree {
  height: 515px;
  margin: 0 4px 0 4px;
  padding: 1px 2px 0;
  border: 1px solid #a3a8ae;
  background: #fdfdfd;
}

.tree-root {
  display: flex;
  align-items: center;
  height: 22px;
  padding-left: 5px;
}

.tree-root svg {
  width: 6px;
  height: 6px;
}

.tree-root b {
  height: 21px;
  padding: 0 0 0 5px;
  margin-left: 4px;
  line-height: 20px;
  font-weight: 600;
  letter-spacing: -0.4px;
  color: #181818;
  background: linear-gradient(90deg, #d6d6d6, #fdfdfd);
}

.layer {
  display: flex;
  align-items: center;
  height: 22px;
  margin-left: 31px;
  padding-left: 7px;
  color: #333;
}

.layer.selected {
  background: #9bb1d3;
}

.layer.off {
  color: #777;
}

.check {
  display: flex;
  flex: none;
  width: 11px;
  height: 11px;
  border: 1px solid #666;
  background: #fff;
}

.check.muted {
  background: #eee;
  border-color: #aaa;
}

.check path {
  fill: none;
  stroke: #333;
  stroke-width: 1.3;
}

.check.muted path {
  stroke: #777;
}

.swatch {
  display: flex;
  flex: none;
  align-items: center;
  justify-content: center;
  width: 24px;
  height: 17px;
  margin-left: 5px;
}

.point {
  background: #eef1f6;
}

.point i {
  width: 14px;
  height: 14px;
  border-radius: 50%;
  background: #000;
}

.checker {
  width: 24px;
  height: 12px;
}

.name {
  flex: none;
  width: 153px;
  margin-left: 6px;
  padding-top: 1px;
  letter-spacing: -0.46px;
}

.flag {
  flex: none;
  width: 13px;
  height: 13px;
  margin-right: 5px;
}

.panel-foot {
  display: flex;
  align-items: center;
  height: 33px;
  padding: 0 0 0 41px;
}

.panel-foot span {
  flex: none;
  width: 189px;
  padding-top: 7px;
}

.panel-foot svg {
  width: 17px;
  height: 17px;
  margin-right: 8px;
  flex: none;
}

.map {
  width: 974px;
  height: 599px;
}

.palette {
  position: absolute;
  width: 55px;
  padding: 2px;
  background: #3c69c8;
  border: 1px solid #2a55b5;
}

.palette.draw {
  left: 1080px;
  top: 110px;
}

.palette.main {
  left: 1139px;
  top: 111px;
}

.palette h2 {
  display: flex;
  align-items: center;
  justify-content: space-between;
  height: 12px;
  margin: 0;
  padding: 0 2px 2px 2px;
  font-size: 10.5px;
  font-weight: 400;
  line-height: 10px;
  letter-spacing: -0.3px;
  color: #fff;
}

.palette h2 svg {
  width: 8px;
  height: 8px;
  fill: none;
  stroke: #fff;
  stroke-width: 1.6;
}

.cells {
  display: grid;
  grid-template-columns: 25px 24px;
  grid-auto-rows: 25px;
}

.cell {
  display: flex;
  align-items: center;
  justify-content: center;
  background: linear-gradient(#d0dffa, #bdd0f4 50%, #98b4e7);
}

.cell svg {
  width: 20px;
  height: 20px;
}

.cell.active {
  background: linear-gradient(#f5b56c, #f4a54d);
  border: 1px solid #4a528d;
}

.dialog {
  position: absolute;
  left: 525px;
  top: 238px;
  width: 233px;
  height: 150px;
  border: 1px solid #5aa2bd;
  background: #f0f0f0;
  box-shadow: 1px 2px 6px rgba(0, 0, 0, 0.35);
  font-family: "Liberation Sans", sans-serif;
  font-size: 10px;
  letter-spacing: -0.42px;
}

.dialog-title {
  display: flex;
  align-items: center;
  justify-content: space-between;
  height: 21px;
  padding: 0 9px 0 3px;
  background: #fff;
  font-family: "Open Sans", sans-serif;
  font-size: 10.5px;
  letter-spacing: -0.4px;
}

.dialog-title span {
  padding-bottom: 2px;
}

.dialog-title svg {
  width: 9px;
  height: 9px;
}

.dialog-body {
  padding: 10px 11px 0 10px;
}

.dialog-body p {
  height: 14px;
  margin: 0 0 5px;
  line-height: 14px;
}

.row {
  display: flex;
  align-items: center;
  height: 18px;
  margin-bottom: 4px;
}

.row label {
  width: 27px;
}

.combo {
  position: relative;
  display: flex;
  align-items: center;
  justify-content: space-between;
  width: 183px;
  height: 18px;
  padding: 1px 3px 0;
  border: 1px solid #b0b0b0;
  background: #e1e1e1;
}

.combo.open {
  border-color: #3f86b9;
  background: #cde1f5;
}

.combo svg {
  width: 8px;
  height: 5px;
  fill: none;
  stroke: #666;
}

.combo ul {
  position: absolute;
  z-index: 1;
  left: -1px;
  top: 17px;
  width: 183px;
  height: 46px;
  margin: 0;
  padding: 0;
  list-style: none;
  background: #fff;
  border: 1px solid #3f86b9;
  box-shadow: 1px 1px 1px rgba(60, 80, 110, 0.4);
}

.combo li {
  height: 11px;
  padding-left: 2px;
  line-height: 12px;
}

.combo li.on {
  color: #fff;
  background: #0c78d0;
}

.ignore {
  display: flex;
  align-items: center;
  height: 18px;
}

.ignore i {
  width: 11px;
  height: 11px;
  margin-right: 3px;
  border: 1px solid #555;
  background: #fff;
}

.buttons {
  display: flex;
  gap: 6px;
  margin: 7px 0 0 20px;
}

.buttons button {
  width: 39px;
  height: 18px;
  padding: 0 0 0 3px;
  border: 1px solid #adadad;
  background: #e1e1e1;
  font: inherit;
  text-align: left;
}

.buttons .next {
  border: 2px solid #1771b5;
}

.pointer {
  position: absolute;
  z-index: 2;
  left: 56px;
  top: 101px;
  width: 9px;
  height: 14px;
}
</style>
